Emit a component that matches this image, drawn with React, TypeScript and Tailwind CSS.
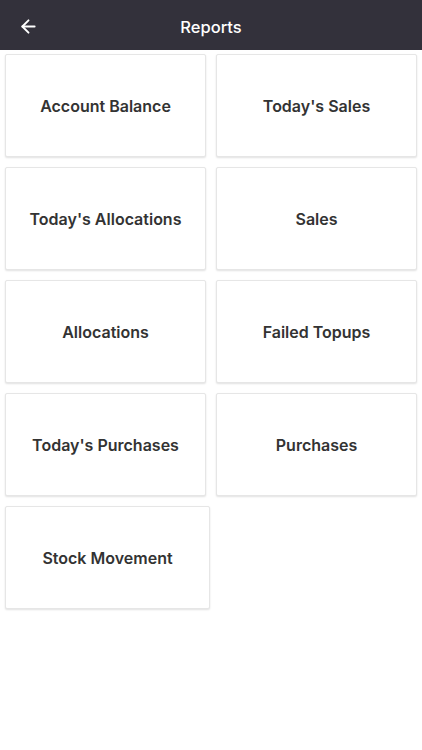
import { ArrowLeft } from 'lucide-react';

const reports = [
  "Account Balance",
  "Today's Sales",
  "Today's Allocations",
  "Sales",
  "Allocations",
  "Failed Topups",
  "Today's Purchases",
  "Purchases",
];

function ReportCard({ label, wide = false }: { label: string; wide?: boolean }) {
  return (
    <button
      className={`h-[103px] bg-white border border-[#e6e6e6] rounded-[2px] shadow-[0_1px_2px_rgba(0,0,0,0.12)] flex items-center justify-center text-[16px] font-semibold text-[#333333] ${wide ? 'w-[205px]' : ''}`}
    >
      {label}
    </button>
  );
}

export default function App() {
  return (
    <div className="min-h-[750px] bg-white" style={{ fontFamily: 'Inter, "Noto Sans", sans-serif' }}>
      <header className="h-[50px] bg-[#33313b] flex items-center relative">
        <button className="absolute left-[18px] top-[16px] text-white">
          <ArrowLeft className="w-[21px] h-[21px]" strokeWidth={2.2} />
        </button>
        <h1 className="w-full text-center text-white text-[16.5px] font-medium mt-[4px]">Reports</h1>
      </header>
      <div className="px-[5px] pt-[4px]">
        <div className="grid grid-cols-2 gap-x-[10px] gap-y-[10px]">
          {reports.map((r) => (
            <ReportCard key={r} label={r} />
          ))}
          <ReportCard label="Stock Movement" wide />
        </div>
      </div>
    </div>
  );
}
